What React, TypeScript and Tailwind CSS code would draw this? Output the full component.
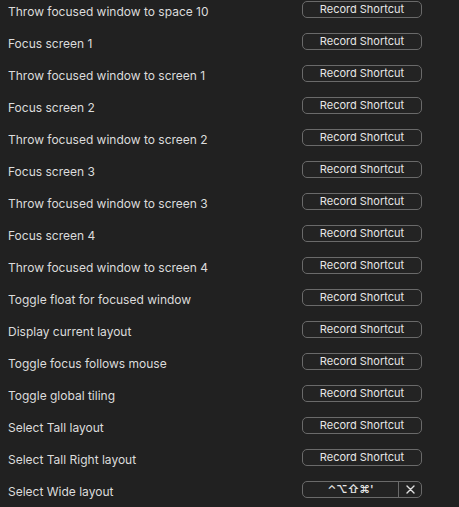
const actions = [
  'Throw focused window to space 10',
  'Focus screen 1',
  'Throw focused window to screen 1',
  'Focus screen 2',
  'Throw focused window to screen 2',
  'Focus screen 3',
  'Throw focused window to screen 3',
  'Focus screen 4',
  'Throw focused window to screen 4',
  'Toggle float for focused window',
  'Display current layout',
  'Toggle focus follows mouse',
  'Toggle global tiling',
  'Select Tall layout',
  'Select Tall Right layout',
  'Select Wide layout',
];

const shortcuts: Record<string, string> = {
  'Select Wide layout': "⌃⌥⇧⌘'",
};

function ShortcutField({ value }: { value?: string }) {
  if (value) {
    return (
      <div className="flex h-[17px] w-[120px] items-stretch rounded-[5px] border border-[#6a6a6a] bg-[#232323] text-[11px] text-[#e6e6e6]">
        <div className="flex flex-1 items-center justify-center border-r border-[#6a6a6a] font-semibold">{value}</div>
        <button className="flex w-[22px] items-center justify-center">
          <svg width="9" height="9" viewBox="0 0 9 9" stroke="#e0e0e0" strokeWidth="1.4" strokeLinecap="round">
            <path d="M1 1L8 8M8 1L1 8" />
          </svg>
        </button>
      </div>
    );
  }
  return (
    <button className="flex h-[17px] w-[120px] items-center justify-center rounded-[5px] border border-[#6a6a6a] bg-[#232323] text-[11px] text-[#e6e6e6]">
      Record Shortcut
    </button>
  );
}

export default function App() {
  return (
    <div
      className="h-[507px] w-[459px] overflow-hidden bg-[#212121] pt-[1px] text-[#dcdcdc]"
      style={{ fontFamily: 'Inter, "Noto Sans", sans-serif' }}
    >
      {actions.map((label) => (
        <div key={label} className="flex h-[32px] items-start">
          <div className="w-[302px] pl-[8px] pt-[2px] text-[12px] leading-[17px]">{label}</div>
          <ShortcutField value={shortcuts[label]} />
        </div>
      ))}
    </div>
  );
}
